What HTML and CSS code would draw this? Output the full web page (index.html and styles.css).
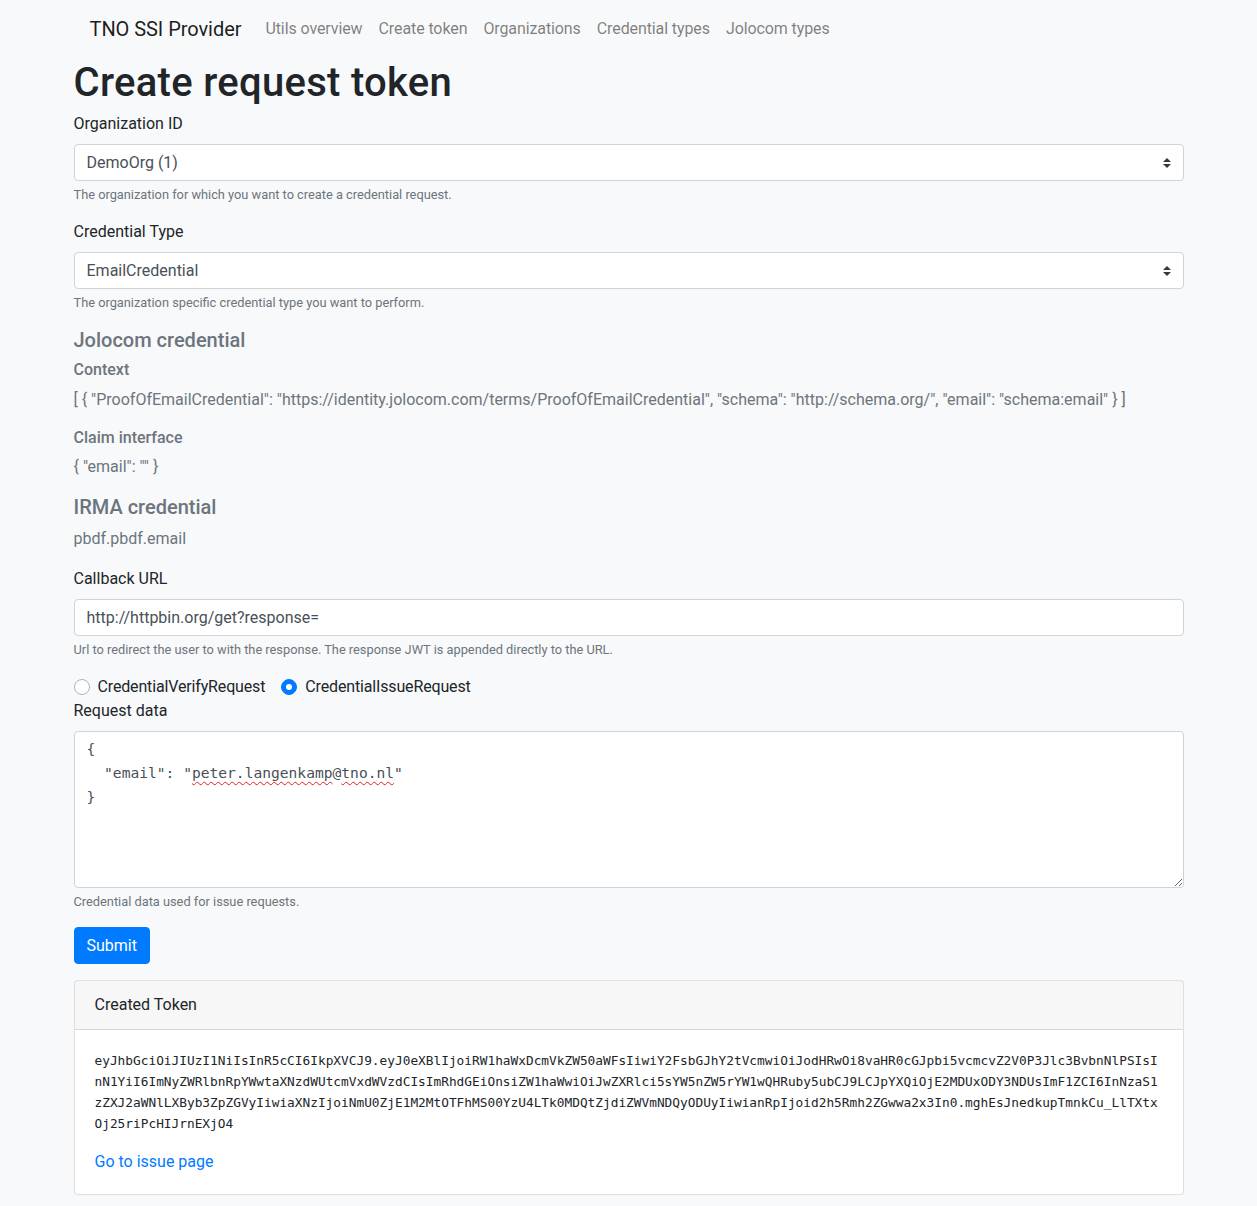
FILE: index.html
```html
<!DOCTYPE html>
<html lang="en">
<head>
<meta charset="utf-8">
<title>Create request token</title>
<link rel="stylesheet" href="styles.css">
</head>
<body>
<div class="container">
  <nav class="navbar">
    <a class="navbar-brand" href="#">TNO SSI Provider</a>
    <ul class="navbar-nav">
      <li><a class="nav-link" href="#">Utils overview</a></li>
      <li><a class="nav-link" href="#">Create token</a></li>
      <li><a class="nav-link" href="#">Organizations</a></li>
      <li><a class="nav-link" href="#">Credential types</a></li>
      <li><a class="nav-link" href="#">Jolocom types</a></li>
    </ul>
  </nav>

  <h1 class="page-title">Create request token</h1>

  <form class="request-form">
    <div class="form-group">
      <label class="form-label">Organization ID</label>
      <div class="select-wrap">
        <select class="custom-select"><option>DemoOrg (1)</option></select>
        <svg class="select-arrow" width="8" height="10" viewBox="0 0 4 5"><path fill="#343a40" d="M2 0L0 2h4zm0 5L0 3h4z"/></svg>
      </div>
      <small class="form-text">The organization for which you want to create a credential request.</small>
    </div>

    <div class="form-group">
      <label class="form-label">Credential Type</label>
      <div class="select-wrap">
        <select class="custom-select"><option>EmailCredential</option></select>
        <svg class="select-arrow" width="8" height="10" viewBox="0 0 4 5"><path fill="#343a40" d="M2 0L0 2h4zm0 5L0 3h4z"/></svg>
      </div>
      <small class="form-text">The organization specific credential type you want to perform.</small>
    </div>

    <div class="credential-info">
      <h5 class="info-title">Jolocom credential</h5>
      <h6 class="info-subtitle">Context</h6>
      <p class="info-value">[ { "ProofOfEmailCredential": "https://identity.jolocom.com/terms/ProofOfEmailCredential", "schema": "http://schema.org/", "email": "schema:email" } ]</p>
      <h6 class="info-subtitle">Claim interface</h6>
      <p class="info-value">{ "email": "" }</p>
      <h5 class="info-title">IRMA credential</h5>
      <p class="info-value">pbdf.pbdf.email</p>
    </div>

    <div class="form-group">
      <label class="form-label">Callback URL</label>
      <input class="form-control" type="text" value="http://httpbin.org/get?response=">
      <small class="form-text">Url to redirect the user to with the response. The response JWT is appended directly to the URL.</small>
    </div>

    <div class="radio-row">
      <label class="custom-radio"><span class="radio-indicator"></span><span>CredentialVerifyRequest</span></label>
      <label class="custom-radio"><span class="radio-indicator checked"></span><span>CredentialIssueRequest</span></label>
    </div>

    <div class="form-group">
      <label class="form-label">Request data</label>
      <div class="form-control textarea">{
  "email": "<span class="misspelled">peter.langenkamp</span>@<span class="misspelled">tno.nl</span>"
}</div>
      <small class="form-text">Credential data used for issue requests.</small>
    </div>

    <button class="btn btn-primary" type="button">Submit</button>
  </form>

  <div class="card">
    <div class="card-header">Created Token</div>
    <div class="card-body">
      <p class="token">eyJhbGciOiJIUzI1NiIsInR5cCI6IkpXVCJ9.eyJ0eXBlIjoiRW1haWxDcmVkZW50aWFsIiwiY2FsbGJhY2tVcmwiOiJodHRwOi8vaHR0cGJpbi5vcmcvZ2V0P3Jlc3BvbnNlPSIsInN1YiI6ImNyZWRlbnRpYWwtaXNzdWUtcmVxdWVzdCIsImRhdGEiOnsiZW1haWwiOiJwZXRlci5sYW5nZW5rYW1wQHRuby5ubCJ9LCJpYXQiOjE2MDUxODY3NDUsImF1ZCI6InNzaS1zZXJ2aWNlLXByb3ZpZGVyIiwiaXNzIjoiNmU0ZjE1M2MtOTFhMS00YzU4LTk0MDQtZjdiZWVmNDQyODUyIiwianRpIjoid2h5Rmh2ZGwwa2x3In0.mghEsJnedkupTmnkCu_LlTXtxOj25riPcHIJrnEXjO4</p>
      <a class="card-link" href="#">Go to issue page</a>
    </div>
  </div>
</div>
</body>
</html>
```

FILE: styles.css
```css
*, *::before, *::after { box-sizing: border-box; }

html, body { margin: 0; padding: 0; }

body {
  background: #f8f9fa;
  color: #212529;
  font-family: Roboto, "Liberation Sans", Arial, sans-serif;
  font-size: 16px;
  line-height: 1.5;
}

.container {
  max-width: 1140px;
  margin: 0 auto;
  padding: 0 15px;
}

/* navbar */
.navbar {
  display: flex;
  align-items: center;
  padding: 8px 16px;
}
.navbar-brand {
  font-size: 20px;
  line-height: 30px;
  padding: 6px 0 4px;
  margin-right: 16px;
  color: rgba(0,0,0,.9);
  text-decoration: none;
  letter-spacing: -0.05px;
}
.navbar-nav {
  display: flex;
  list-style: none;
  margin: 0;
  padding: 0;
}
.nav-link {
  display: block;
  padding: 9px 8px 7px;
  color: rgba(0,0,0,.5);
  text-decoration: none;
  letter-spacing: -0.1px;
}

.page-title {
  font-size: 40px;
  font-weight: 500;
  line-height: 1.2;
  letter-spacing: 0.3px;
  padding-top: 3px;
  margin: 0 0 5px;
}

/* forms */
.form-group { margin-bottom: 16px; }
.form-label {
  display: inline-block;
  margin-bottom: 8px;
}
.form-text {
  display: block;
  margin-top: 4px;
  font-size: 12.8px;
  line-height: 1.5;
  color: #6c757d;
}

.select-wrap { display: grid; }
.select-wrap > * { grid-area: 1 / 1; }
.custom-select,
.form-control {
  display: block;
  width: 100%;
  height: 37px;
  padding: 6px 28px 6px 12px;
  font-family: inherit;
  font-size: 16px;
  line-height: 23px;
  color: #495057;
  background: #fff;
  border: 1px solid #ced4da;
  border-radius: 4px;
  appearance: none;
  -webkit-appearance: none;
  outline: none;
}
.form-control { padding-right: 12px; }
.select-arrow {
  align-self: center;
  justify-self: end;
  margin-right: 13px;
  pointer-events: none;
}

.textarea {
  height: 157px;
  padding-top: 5px;
  white-space: pre;
  font-family: "DejaVu Sans Mono", monospace;
  font-size: 14.6px;
  line-height: 24px;
  color: #495057;
  overflow: auto;
  resize: vertical;
}
.misspelled {
  text-decoration: underline wavy #e02020;
  text-decoration-thickness: 1px;
  text-underline-offset: 3px;
}

/* credential info */
.credential-info { color: #6c757d; }
.info-title {
  font-size: 20px;
  font-weight: 500;
  line-height: 1.2;
  margin: 0 0 8px;
}
.info-subtitle {
  font-size: 16px;
  font-weight: 500;
  line-height: 1.2;
  margin: 0 0 8px;
}
.info-value { margin: 0 0 16px; }

/* radios */
.radio-row { display: flex; }
.custom-radio {
  display: inline-flex;
  align-items: center;
  gap: 8px;
  margin-right: 16px;
  min-height: 24px;
  letter-spacing: -0.15px;
}
.radio-indicator {
  width: 16px;
  height: 16px;
  border-radius: 50%;
  border: 1px solid #adb5bd;
  background: #fff;
  display: inline-flex;
  align-items: center;
  justify-content: center;
}
.radio-indicator.checked {
  background: #007bff;
  border-color: #007bff;
}
.radio-indicator.checked::after {
  content: "";
  width: 6px;
  height: 6px;
  border-radius: 50%;
  background: #fff;
}

/* button */
.btn {
  display: inline-block;
  font-family: inherit;
  font-size: 16px;
  line-height: 23px;
  padding: 6px 12px;
  border: 1px solid transparent;
  border-radius: 4px;
  cursor: pointer;
}
.btn-primary {
  color: #fff;
  background: #007bff;
  border-color: #007bff;
}

/* card */
.card {
  margin-top: 16px;
  background: #fff;
  border: 1px solid rgba(0,0,0,.125);
  border-radius: 4px;
}
.card-header {
  padding: 12px 20px;
  background: rgba(0,0,0,.03);
  border-bottom: 1px solid rgba(0,0,0,.125);
}
.card-body { padding: 20px; }
.token {
  margin: 0 0 16px;
  font-family: "DejaVu Sans Mono", monospace;
  font-size: 12.8px;
  line-height: 21px;
  color: #212529;
  word-break: break-all;
}
.card-link {
  color: #007bff;
  text-decoration: none;
}
```
